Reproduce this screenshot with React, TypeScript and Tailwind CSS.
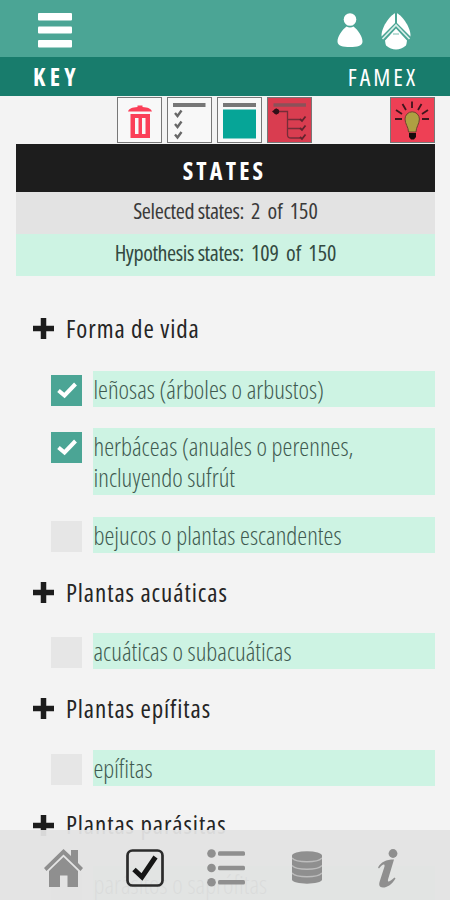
import React, { useState } from 'react';

type StateItem = { id: string; lines: string[] };
type Group = { title: string; items: StateItem[] };

const GROUPS: Group[] = [
  {
    title: 'Forma de vida',
    items: [
      { id: 'lenosas', lines: ['leñosas (árboles o arbustos)'] },
      { id: 'herbaceas', lines: ['herbáceas (anuales o perennes,', 'incluyendo sufrút'] },
      { id: 'bejucos', lines: ['bejucos o plantas escandentes'] },
    ],
  },
  {
    title: 'Plantas acuáticas',
    items: [{ id: 'acuaticas', lines: ['acuáticas o subacuáticas'] }],
  },
  {
    title: 'Plantas epífitas',
    items: [{ id: 'epifitas', lines: ['epífitas'] }],
  },
  {
    title: 'Plantas parásitas',
    items: [{ id: 'parasitas', lines: ['parásitos o saprófitas'] }],
  },
];

function MenuIcon() {
  return (
    <svg width="34" height="35" viewBox="0 0 34 35" fill="#fff">
      <rect x="0" y="0" width="34" height="7.5" rx="1" />
      <rect x="0" y="13.5" width="34" height="7" rx="1" />
      <rect x="0" y="27" width="34" height="7.5" rx="1" />
    </svg>
  );
}

function UserIcon() {
  return (
    <svg width="26" height="35" viewBox="0 0 26 35" fill="#fff">
      <circle cx="13" cy="6.5" r="6.3" />
      <path d="M9.500 13.500Q13 15.500 16.500 13.500C21 17 25.500 23.500 25.500 28.500C25.500 33 20 34 13 34S0.500 33 0.500 28.500C0.500 23.500 5 17 9.500 13.500Z" />
    </svg>
  );
}

function LogoIcon() {
  return (
    <svg width="30" height="37" viewBox="0 0 30 37">
      <path d="M15 0C20 1 29 13 29.500 22C29 31 22 36.500 15 36.500S1 31 0.500 22C1 13 10 1 15 0Z" fill="#fff" />
      <path d="M0 24L15 9L30 24V37H24.500L26 27.500L15 15.500L4 27.500L5.500 37H0Z" fill="#4ba595" />
      <path d="M1.500 26L15 12L28.500 26" fill="none" stroke="#d9efea" strokeWidth="1.7" />
      <path d="M15 0V10" stroke="#4ba595" strokeWidth="2" />
      <path d="M12 21H18" stroke="#8cc6bb" strokeWidth="1.200" />
    </svg>
  );
}

function TrashIcon() {
  return (
    <svg width="43" height="43" viewBox="0 0 43 43">
      <path d="M10 12.500C11 9.500 14 8.500 19.500 8V6.500H24.500V8C30 8.500 33 9.500 34 12.500Z" fill="#fb3f58" />
      <path d="M12.500 15H32V39H12.500ZM17 19V35H20.500V19ZM24 19V35H27.500V19Z" fill="#fb3f58" fillRule="evenodd" />
    </svg>
  );
}

function CheckListIcon() {
  return (
    <svg width="43" height="43" viewBox="0 0 43 43" fill="none">
      <path d="M5 6H37.500" stroke="#777" strokeWidth="4" />
      <g stroke="#686868" strokeWidth="2.400">
        <path d="M7 14L9.500 17L13.500 11.500" />
        <path d="M7 25L9.500 28L13.500 22.500" />
        <path d="M7 35.500L9.500 38.500L13.500 33" />
      </g>
    </svg>
  );
}

function PanelIcon() {
  return (
    <svg width="43" height="43" viewBox="0 0 43 43">
      <rect x="5" y="4" width="33" height="4" fill="#777" />
      <rect x="5" y="10.500" width="33" height="29" fill="#06a597" />
    </svg>
  );
}

function TreeIcon() {
  return (
    <svg width="43" height="43" viewBox="0 0 43 43" fill="none">
      <path d="M5.500 6H38" stroke="#8c5159" strokeWidth="3.500" />
      <path d="M8 12.500H19.500V36Q19.500 39 23 39H32M19.500 20.500H32M19.500 29.500H32" stroke="#762d38" strokeWidth="1.300" />
      <path d="M4 12.500L8.500 9V16Z" fill="#301018" />
      <circle cx="8.500" cy="12.500" r="2.700" fill="#301018" />
      <path d="M32 20L34 22L37.500 17.500M32 29L34 31L37.500 26.500M32 38L34 40L37.500 35.500" stroke="#61232d" strokeWidth="1.800" />
    </svg>
  );
}

function BulbIcon() {
  return (
    <svg width="43" height="43" viewBox="0 0 43 43" fill="none">
      <g stroke="#40151d" strokeWidth="1.800">
        <path d="M21 2.500V9M11.500 5L15 11M30.500 5L27 11M5 11L11 15M37 11L31 15M4 20H11M31 20H38" />
      </g>
      <path d="M17.500 33C17.500 28 14 25 14 20A7.200 7.200 0 0 1 28.400 20C28.400 25 25 28 25 33Z" fill="#aea042" stroke="#704030" strokeWidth="1" />
      <path d="M18 34H25V38L23 40.500H20L18 38Z" fill="#160b0c" />
    </svg>
  );
}

function PlusIcon() {
  return (
    <svg width="21" height="21" viewBox="0 0 21 21" className="shrink-0">
      <path d="M10.500 0V21M0 10.500H21" stroke="#1c1c1c" strokeWidth="5.500" />
    </svg>
  );
}

function HomeIcon() {
  return (
    <svg width="39" height="38" viewBox="0 0 39 38" fill="#8f8f8f">
      <path d="M19.500 0L27 7V1H34V14L39 19L36.500 22L19.500 5.500L2.500 22L0 19Z" />
      <path d="M5 22L19.500 8L34 22V38H23.500V26.500H16V38H5Z" />
    </svg>
  );
}

function CheckboxIcon() {
  return (
    <svg width="38" height="38" viewBox="0 0 38 38" fill="none">
      <rect x="1.500" y="1.500" width="35" height="35" rx="5" stroke="#2b2b2b" strokeWidth="2.700" />
      <path d="M8 20.500L16 28L29.500 8" stroke="#161616" strokeWidth="5" />
    </svg>
  );
}

function ListIcon() {
  return (
    <svg width="66" height="38" viewBox="0 0 66 38" fill="#8f8f8f">
      <circle cx="4.500" cy="4.500" r="4.300" />
      <circle cx="4.500" cy="19" r="4.300" />
      <circle cx="4.500" cy="33.300" r="4.300" />
      <rect x="11" y="2.200" width="27" height="4.600" rx="1.500" />
      <rect x="11" y="16.700" width="27" height="4.600" rx="1.500" />
      <rect x="11" y="31" width="27" height="4.600" rx="1.500" />
    </svg>
  );
}

function DatabaseIcon() {
  return (
    <svg width="30" height="33" viewBox="0 0 30 33">
      <path d="M0 4.500V28.500C0 34 30 34 30 28.500V4.500Z" fill="#8f8f8f" />
      <ellipse cx="15" cy="4.800" rx="15" ry="4.600" fill="#8f8f8f" />
      <path d="M0 7C4 12 26 12 30 7M0 14.500C4 19.500 26 19.500 30 14.500M0 22C4 27 26 27 30 22" fill="none" stroke="#bdbdbd" strokeWidth="1.300" />
    </svg>
  );
}

function InfoIcon() {
  return (
    <svg width="20" height="39" viewBox="0 0 20 39" fill="#8f8f8f">
      <circle cx="15" cy="4.500" r="4.400" />
      <path d="M0 18.500C3 13 8 10.500 16 10.500L10 30.500C9.500 33.500 11 33.500 16.500 28.500L17.500 29.500C13.500 36 9 38.500 5 38.500C1 38.500 0.500 35.500 2 31.500L6.500 17.500C7 14.500 4.500 15 1 19.500Z" />
    </svg>
  );
}

function StateRow({ item, checked, onToggle }: { item: StateItem; checked: boolean; onToggle: () => void }) {
  return (
    <div className="flex items-start gap-[11px]">
      <button onClick={onToggle} className={`mt-[4px] flex h-[31px] w-[31px] shrink-0 items-center justify-center ${checked ? 'bg-[#4ba595]' : 'bg-[#e6e6e6]'}`}>
        {checked && (
          <svg width="20" height="17" viewBox="0 0 20 17" fill="none">
            <path d="M1.500 8.500L7.500 13.500L18.500 2" stroke="#fff" strokeWidth="4" />
          </svg>
        )}
      </button>
      <div className="flex-1 bg-[#cdf3e3] pt-[3px] pb-[2px] pl-[0.5px] text-[25px] leading-[31px] font-light text-[#3f5a50]">
        {item.lines.map(line => (
          <div key={line} className="whitespace-nowrap">{line}</div>
        ))}
      </div>
    </div>
  );
}

export default function App() {
  const [checked, setChecked] = useState<Set<string>>(new Set(['lenosas', 'herbaceas']));

  const toggle = (id: string) => {
    setChecked(prev => {
      const next = new Set(prev);
      if (next.has(id)) next.delete(id);
      else next.add(id);
      return next;
    });
  };

  return (
    <div className="relative h-[900px] w-[450px] overflow-hidden bg-[#f3f3f3] font-['Open_Sans',sans-serif] font-stretch-condensed">
      <header className="flex h-[57px] items-start bg-[#4ba595] pt-[13px] pr-[39px] pl-[38px]">
        <MenuIcon />
        <div className="ml-auto flex gap-[18px]">
          <UserIcon />
          <LogoIcon />
        </div>
      </header>
      <div className="flex h-[39px] items-center justify-between bg-[#187c6c] pr-[32px] pl-[33px] text-[24px] text-white">
        <span className="font-bold tracking-[4.4px]">KEY</span>
        <span className="tracking-[2.9px]">FAMEX</span>
      </div>

      <div className="flex h-[48px] gap-[5px] pt-[1px] pr-[15px] pl-[117px]">
        <button className="h-[46px] w-[45px] border border-[#777] bg-[#f8f8f8]"><TrashIcon /></button>
        <button className="h-[46px] w-[45px] border border-[#777] bg-[#f8f8f8]"><CheckListIcon /></button>
        <button className="h-[46px] w-[45px] border border-[#777] bg-[#f8f8f8]"><PanelIcon /></button>
        <button className="h-[46px] w-[45px] border border-[#777] bg-[#d93d50]"><TreeIcon /></button>
        <button className="ml-auto h-[46px] w-[45px] border border-[#777] bg-[#ee4055]"><BulbIcon /></button>
      </div>

      <section className="mr-[15px] ml-[16px] text-center">
        <h1 className="h-[48px] bg-[#1d1d1d] pt-[3px] pr-[2px] text-[24px] leading-[48px] font-bold tracking-[3.2px] text-white">STATES</h1>
        <p className="h-[42px] bg-[#e3e3e3] text-[22px] leading-[36px] text-[#3a3a3a]">
          <span className="tracking-[-0.4px]">Selected states:</span>
          <span className="[word-spacing:3px]"> 2 of 150</span>
        </p>
        <p className="h-[42px] bg-[#cdf3e3] text-[22px] leading-[36px] text-[#334a41]">
          <span className="tracking-[-0.4px]">Hypothesis states:</span>
          <span className="[word-spacing:3px]"> 109 of 150</span>
        </p>
      </section>

      <main className="pt-[14.6px] pr-[15px]">
        {GROUPS.map((group, i) => (
          <div key={group.title}>
            <div className={`flex h-[80.4px] items-center gap-[12px] pl-[33px] ${i === 0 ? 'pb-[4px]' : 'pb-[1px]'}`}>
              <PlusIcon />
              <h2 className="text-[25px] tracking-[0.9px] whitespace-nowrap text-[#252525]">{group.title}</h2>
            </div>
            <div className="flex flex-col gap-[21.4px] pl-[51px]">
              {group.items.map(item => (
                <StateRow key={item.id} item={item} checked={checked.has(item.id)} onToggle={() => toggle(item.id)} />
              ))}
            </div>
          </div>
        ))}
      </main>

      <nav className="absolute inset-x-0 bottom-0 flex h-[70px] items-start bg-[#e3e3e3]/95 pt-[19px] pl-[44px]">
        <button className="mr-[43px]"><HomeIcon /></button>
        <button className="mr-[43px]"><CheckboxIcon /></button>
        <button className="mr-[19px]"><ListIcon /></button>
        <button className="mt-[2px] mr-[56px]"><DatabaseIcon /></button>
        <button><InfoIcon /></button>
      </nav>
    </div>
  );
}
